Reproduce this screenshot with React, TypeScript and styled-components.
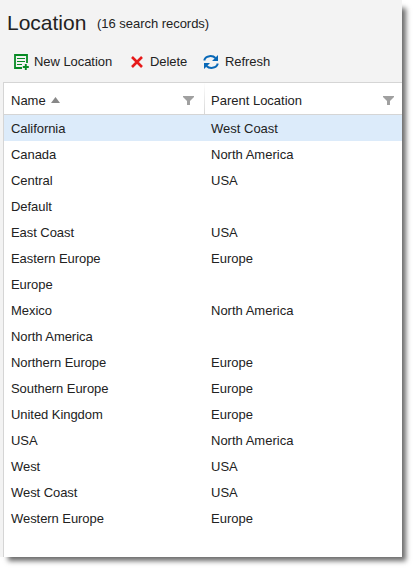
import React from 'react';
import styled, { createGlobalStyle } from 'styled-components';

const GlobalStyle = createGlobalStyle`
  body {
    margin: 0;
    background: #fff;
    color: #222;
    font: 13px/26px "Liberation Sans", Arial, sans-serif;
  }
`;

const Page = styled.div`
  width: 417px;
  height: 572px;
  overflow: hidden;
`;

const Panel = styled.main`
  box-sizing: border-box;
  display: flex;
  flex-direction: column;
  width: 402px;
  height: 557px;
  background: #f3f3f3;
  box-shadow: 6px 6px 5px -2px #6c6c6c;
`;

const Heading = styled.header`
  display: flex;
  align-items: flex-start;
  gap: 11px;
  height: 44px;
  padding-left: 7px;
  box-sizing: border-box;
`;

const Title = styled.h1`
  margin: 0;
  width: 79px;
  font-size: 21px;
  font-weight: 400;
  line-height: 46px;
  white-space: nowrap;
`;

const Count = styled.span`
  line-height: 47px;
  letter-spacing: -0.03px;
`;

const Toolbar = styled.div`
  display: flex;
  align-items: center;
  height: 38px;
  padding: 0 0 3px 13px;
  box-sizing: border-box;
`;

const Action = styled.button<{ $width: number; $gap: number }>`
  display: flex;
  align-items: center;
  gap: ${(p) => p.$gap}px;
  width: ${(p) => p.$width}px;
  padding: 0;
  border: 0;
  background: none;
  color: inherit;
  font: inherit;
  letter-spacing: -0.06px;
  white-space: nowrap;

  svg {
    flex: none;
  }
`;

const Grid = styled.section`
  flex: 1;
  margin-left: 3px;
  border: solid #d5d5d5;
  border-width: 1px 0 0 1px;
  background: #fff;
`;

const HeaderRow = styled.div`
  display: grid;
  grid-template-columns: 200px 1fr;
  height: 32px;
  box-sizing: border-box;
  border-bottom: 1px solid #d5d5d5;
`;

const HeaderCell = styled.div<{ $divided?: boolean }>`
  display: flex;
  align-items: center;
  box-sizing: border-box;
  padding: 4px ${(p) => (p.$divided ? 8 : 10)}px 0 ${(p) => (p.$divided ? 6 : 7)}px;
  border-left: ${(p) => (p.$divided ? '1px solid' : '0')};
  border-image: linear-gradient(#fff, #d5d5d5) 1;
`;

const SortIcon = styled.svg`
  margin: 0 0 1px 5px;
`;

const FilterIcon = styled.svg`
  margin: 0 0 1px auto;
`;

const Row = styled.div<{ $selected?: boolean }>`
  display: grid;
  grid-template-columns: 200px 1fr;
  height: 26px;
  background: ${(p) => (p.$selected ? '#dcebfa' : 'transparent')};
`;

const Cell = styled.span`
  padding-left: 7px;
  line-height: 28px;
  height: 26px;
  white-space: nowrap;
  letter-spacing: -0.06px;

  & + & {
    letter-spacing: 0;
  }
`;

const locations: [string, string][] = [
  ['California', 'West Coast'],
  ['Canada', 'North America'],
  ['Central', 'USA'],
  ['Default', ''],
  ['East Coast', 'USA'],
  ['Eastern Europe', 'Europe'],
  ['Europe', ''],
  ['Mexico', 'North America'],
  ['North America', ''],
  ['Northern Europe', 'Europe'],
  ['Southern Europe', 'Europe'],
  ['United Kingdom', 'Europe'],
  ['USA', 'North America'],
  ['West', 'USA'],
  ['West Coast', 'USA'],
  ['Western Europe', 'Europe'],
];

const NewIcon = () => (
  <svg width="16" height="16" viewBox="0 0 16 16" fill="none" stroke="#078b24">
    <path d="M9 14H2V1h12v8" strokeWidth="1.8" />
    <path d="M4 4.5h8M4 7.5h8M4 10.5h5" strokeWidth="1.1" />
    <path d="M12.8 10v6M9.8 13h6" strokeWidth="1.9" />
  </svg>
);

const DeleteIcon = () => (
  <svg width="12" height="12" viewBox="0 0 12 12" fill="none" stroke="#e61919">
    <path d="M1 1l10 10M11 1L1 11" strokeWidth="2.6" />
  </svg>
);

const RefreshIcon = () => (
  <svg width="16" height="16" viewBox="0 0 16 16" fill="none" stroke="#0868b7" strokeWidth="2">
    <path d="M1.5 6.5V5.5C3 1.6 9.5 1 12.5 4M14.5 9.5v1C13 14.4 6.5 15 3.5 12" />
    <path d="M15 1v6H9zM1 15V9h6z" fill="#0868b7" stroke="none" />
  </svg>
);

const Filter = () => (
  <FilterIcon width="11" height="9" viewBox="0 0 11 9">
    <path d="M0 0h11v1L7 5v4H4V5L0 1z" fill="#a0a0a0" />
  </FilterIcon>
);

export default function App() {
  return (
    <Page>
      <GlobalStyle />
      <Panel>
        <Heading>
          <Title>Location</Title>
          <Count>(16 search records)</Count>
        </Heading>
        <Toolbar>
          <Action $width={118} $gap={5}><NewIcon />New Location</Action>
          <Action $width={72} $gap={7}><DeleteIcon />Delete</Action>
          <Action $width={70} $gap={6}><RefreshIcon />Refresh</Action>
        </Toolbar>
        <Grid>
          <HeaderRow>
            <HeaderCell>
              Name
              <SortIcon width="9" height="6" viewBox="0 0 9 6">
                <path d="M0 6L4.5 0 9 6z" fill="#888" />
              </SortIcon>
              <Filter />
            </HeaderCell>
            <HeaderCell $divided>
              Parent Location
              <Filter />
            </HeaderCell>
          </HeaderRow>
          {locations.map(([name, parent], index) => (
            <Row key={name} $selected={index === 0}>
              <Cell>{name}</Cell>
              <Cell>{parent}</Cell>
            </Row>
          ))}
        </Grid>
      </Panel>
    </Page>
  );
}
